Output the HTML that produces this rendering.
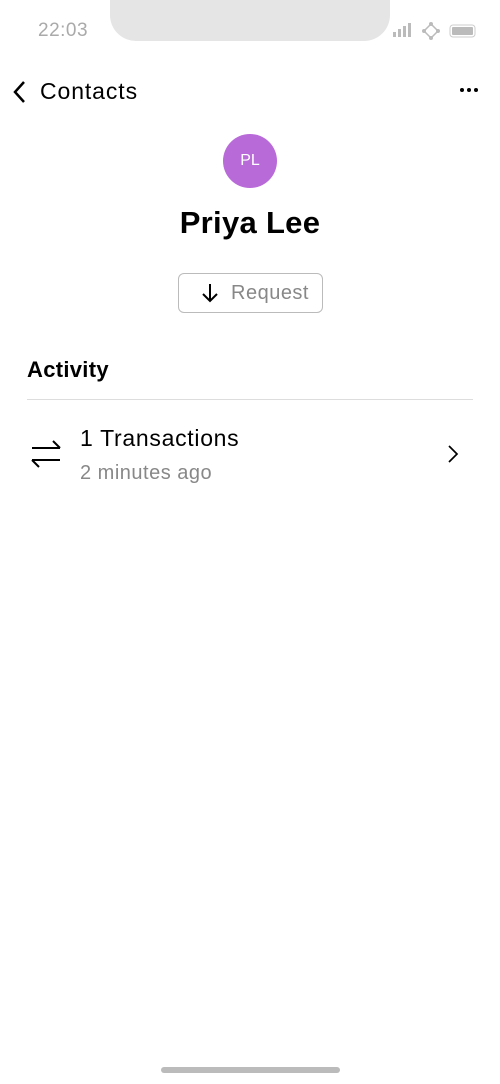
<!DOCTYPE html>
<html><head><style>
body{margin:0;width:500px;height:1084px;background:#fff;font-family:"Liberation Sans",sans-serif;position:relative;overflow:hidden}
.a{position:absolute}
</style></head><body>
<div class="a" style="left:110px;top:-2px;width:280px;height:43px;background:#e5e5e5;border-radius:0 0 26px 26px"></div>
<div class="a" style="left:38px;top:20px;font-size:19px;color:#aaa;letter-spacing:0.5px">22:03</div>
<svg class="a" style="left:390px;top:20px" width="90" height="22">
<rect x="3" y="12" width="3" height="5" fill="#bbb"/><rect x="8" y="9" width="3" height="8" fill="#bbb"/><rect x="13" y="6" width="3" height="11" fill="#bbb"/><rect x="18" y="3" width="3" height="14" fill="#bbb"/>
<path d="M41 4 L48 11 L41 18 L34 11Z" fill="none" stroke="#bbb" stroke-width="1.5"/><circle cx="41" cy="4" r="2" fill="#bbb"/><circle cx="34" cy="11" r="2" fill="#bbb"/><circle cx="48" cy="11" r="2" fill="#bbb"/><circle cx="41" cy="18" r="2" fill="#bbb"/>
<rect x="60" y="5" width="25" height="12" rx="3" fill="none" stroke="#ccc"/><rect x="62" y="7" width="21" height="8" rx="1" fill="#bbb"/>
</svg>
<svg class="a" style="left:10px;top:80px" width="20" height="24"><path d="M14 2 L5 12 L14 22" fill="none" stroke="#000" stroke-width="2.5"/></svg>
<div class="a" style="left:40px;top:78px;font-size:23px;color:#000;letter-spacing:0.9px">Contacts</div>
<svg class="a" style="left:458px;top:86px" width="24" height="8"><circle cx="4" cy="4" r="2" fill="#000"/><circle cx="11" cy="4" r="2" fill="#000"/><circle cx="18" cy="4" r="2" fill="#000"/></svg>
<div class="a" style="left:223px;top:134px;width:54px;height:54px;border-radius:50%;background:#b96ad9;color:#fff;font-size:16px;text-align:center;line-height:54px">PL</div>
<div class="a" style="left:0;width:500px;top:205px;text-align:center;font-size:31px;font-weight:bold;letter-spacing:0.3px">Priya Lee</div>
<div class="a" style="left:178px;top:273px;width:143px;height:38px;border:1px solid #bbb;border-radius:6px"></div>
<svg class="a" style="left:200px;top:282px" width="20" height="22"><path d="M10 2 V19 M3 12 L10 19 L17 12" fill="none" stroke="#000" stroke-width="2"/></svg>
<div class="a" style="left:231px;top:282px;font-size:20px;color:#888;letter-spacing:0.5px">Request</div>
<div class="a" style="left:27px;top:357px;font-size:22px;font-weight:bold;letter-spacing:0.3px">Activity</div>
<div class="a" style="left:27px;top:399px;width:446px;height:1px;background:#ddd"></div>
<svg class="a" style="left:30px;top:437px" width="34" height="34"><path d="M2 11 H30 M23 4 L30 11 M2 23 H30 M2 23 L9 30" fill="none" stroke="#000" stroke-width="2"/></svg>
<div class="a" style="left:80px;top:425px;font-size:23px;letter-spacing:0.7px">1 Transactions</div>
<div class="a" style="left:80px;top:462px;font-size:20px;color:#888;letter-spacing:0.5px">2 minutes ago</div>
<svg class="a" style="left:446px;top:444px" width="14" height="20"><path d="M3 2 L11 10 L3 18" fill="none" stroke="#000" stroke-width="1.7"/></svg>
<div class="a" style="left:161px;top:1067px;width:179px;height:6px;border-radius:3px;background:#bbb"></div>
</body></html>
